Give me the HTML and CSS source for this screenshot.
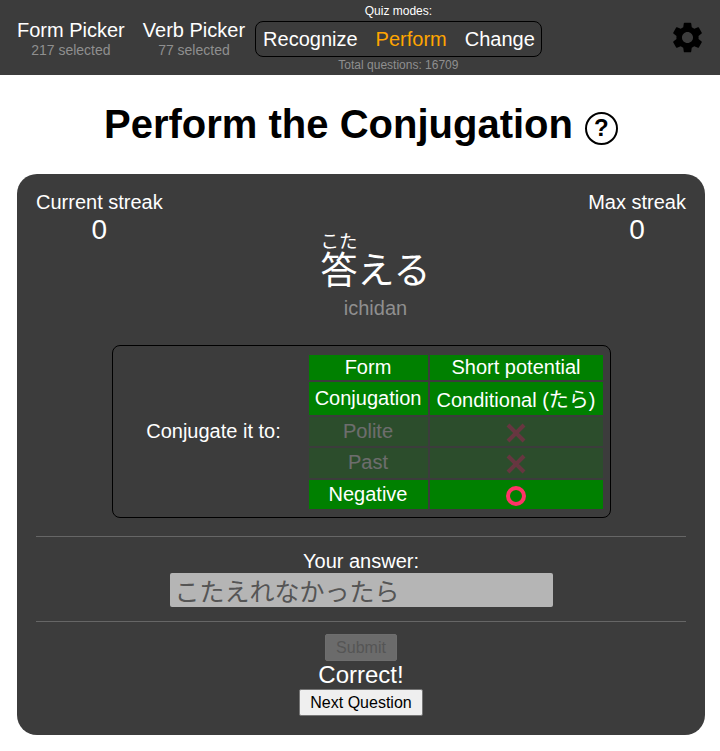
FILE: index.html
```html
<!DOCTYPE html>
<html lang="en">
<head>
  <meta charset="UTF-8">
  <meta name="viewport" content="width=device-width, initial-scale=1.0">
  <title>Perform the Conjugation</title>
  <link rel="stylesheet" href="styles.css">
</head>
<body>
  <header class="topbar">
    <div class="picker">
      <div class="picker-name">Form Picker</div>
      <div class="picker-count">217 selected</div>
    </div>
    <div class="picker">
      <div class="picker-name">Verb Picker</div>
      <div class="picker-count">77 selected</div>
    </div>
    <div class="modes">
      <div class="modes-label">Quiz modes:</div>
      <div class="modes-box">
        <span>Recognize</span>
        <span class="mode-active">Perform</span>
        <span>Change</span>
      </div>
      <div class="modes-total">Total questions: 16709</div>
    </div>
    <svg class="gear" viewBox="0 0 24 24" aria-label="Settings">
      <path d="M19.14 12.94c.04-.3.06-.61.06-.94 0-.32-.02-.64-.07-.94l2.03-1.58c.18-.14.23-.41.12-.61l-1.92-3.32c-.12-.22-.37-.29-.59-.22l-2.39.96c-.5-.38-1.03-.7-1.62-.94l-.36-2.54c-.04-.24-.24-.41-.48-.41h-3.84c-.24 0-.43.17-.47.41l-.36 2.54c-.59.24-1.13.57-1.62.94l-2.39-.96c-.22-.08-.47 0-.59.22L2.74 8.87c-.12.21-.08.47.12.61l2.03 1.58c-.05.3-.09.63-.09.94s.02.64.07.94l-2.03 1.58c-.18.14-.23.41-.12.61l1.92 3.32c.12.22.37.29.59.22l2.39-.96c.5.38 1.03.7 1.62.94l.36 2.54c.05.24.24.41.48.41h3.84c.24 0 .44-.17.47-.41l.36-2.54c.59-.24 1.13-.56 1.62-.94l2.39.96c.22.08.47 0 .59-.22l1.92-3.32c.12-.22.07-.47-.12-.61l-2.01-1.58zM12 15.6c-1.98 0-3.6-1.62-3.6-3.6s1.62-3.6 3.6-3.6 3.6 1.62 3.6 3.6-1.62 3.6-3.6 3.6z"/>
    </svg>
  </header>

  <h1 class="title">Perform the Conjugation <span class="help">?</span></h1>

  <main class="card">
    <div class="card-top">
      <div class="streak">
        <div>Current streak</div>
        <div class="streak-num">0</div>
      </div>
      <div class="word">
        <div class="word-text"><ruby>答<rt>こた</rt></ruby>える</div>
        <div class="word-type">ichidan</div>
      </div>
      <div class="streak">
        <div>Max streak</div>
        <div class="streak-num">0</div>
      </div>
    </div>

    <div class="target">
      <div class="target-label">Conjugate it to:</div>
      <table class="target-table">
        <tr class="row-form"><td class="col-name">Form</td><td class="col-value">Short potential</td></tr>
        <tr class="row-conj"><td>Conjugation</td><td>Conditional (たら)</td></tr>
        <tr class="row-flag row-off">
          <td>Polite</td>
          <td><svg class="mark" viewBox="0 0 20 20"><path class="mark-x" d="M2 2L18 18M18 2L2 18"/></svg></td>
        </tr>
        <tr class="row-flag row-off row-past">
          <td>Past</td>
          <td><svg class="mark" viewBox="0 0 20 20"><path class="mark-x" d="M2 2L18 18M18 2L2 18"/></svg></td>
        </tr>
        <tr class="row-flag">
          <td>Negative</td>
          <td><svg class="mark" viewBox="0 0 20 20"><circle class="mark-o" cx="10" cy="10" r="8"/></svg></td>
        </tr>
      </table>
    </div>

    <hr class="rule rule-first">
    <div class="answer">
      <label class="answer-label" for="answer">Your answer:</label>
      <input class="answer-input" id="answer" type="text" value="こたえれなかったら" disabled>
    </div>
    <hr class="rule rule-second">

    <div class="actions">
      <button class="btn btn-submit" disabled>Submit</button>
      <div class="result">Correct!</div>
      <button class="btn btn-next">Next Question</button>
    </div>
  </main>
</body>
</html>
```

FILE: styles.css
```css
* {
  box-sizing: border-box;
}

body {
  margin: 0;
  background: #fff;
  font-family: "Liberation Sans", "Noto Sans CJK JP", sans-serif;
  font-size: 20px;
  color: #fff;
}

.topbar {
  display: flex;
  align-items: center;
  height: 75px;
  padding: 0 14px 0 17px;
  background: #3c3c3c;
}

.picker {
  margin-right: 18px;
  padding-top: 2px;
  text-align: center;
}

.picker + .picker {
  margin-right: 10px;
}

.picker-name {
  line-height: 23px;
}

.picker-count {
  font-size: 14px;
  line-height: 16px;
  color: #8f8f8f;
}

.modes {
  display: flex;
  flex-direction: column;
  align-items: center;
}

.modes-label {
  font-size: 12px;
  line-height: 19px;
}

.modes-box {
  display: flex;
  gap: 18px;
  height: 36px;
  padding: 0 6px 0 7px;
  border: 1px solid #000;
  border-radius: 8px;
  line-height: 34px;
}

.mode-active {
  color: #ffa500;
}

.modes-total {
  font-size: 12px;
  line-height: 16px;
  color: #8f8f8f;
}

.gear {
  width: 37px;
  height: 37px;
  margin-left: auto;
  fill: #000;
}

.title {
  display: flex;
  justify-content: center;
  align-items: center;
  gap: 12px;
  height: 99px;
  margin: 0;
  padding: 0 0 2px 2px;
  font-size: 40px;
  line-height: 46px;
  color: #000;
}

.help {
  display: flex;
  justify-content: center;
  align-items: center;
  width: 33px;
  height: 33px;
  margin-top: 9px;
  border: 2px solid #000;
  border-radius: 50%;
  font-size: 24px;
}

.card {
  width: 688px;
  height: 561px;
  margin-left: 17px;
  padding: 17px 19px 0;
  border-radius: 20px;
  background: #3c3c3c;
}

.card-top {
  display: flex;
  justify-content: space-between;
  height: 154px;
}

.streak {
  text-align: center;
  line-height: 23px;
}

.streak-num {
  font-size: 28px;
  line-height: 32px;
}

.word {
  padding-top: 40px;
  text-align: center;
}

.word-text {
  font-size: 37px;
  line-height: 50px;
}

.word-text rt {
  font-size: 18.5px;
  line-height: 16px;
}

.word-type {
  line-height: 23px;
  color: #8f8f8f;
}

.target {
  display: flex;
  align-items: center;
  width: 499px;
  height: 173px;
  margin: 0 auto;
  padding: 0 5px 0 8px;
  border: 1px solid #000;
  border-radius: 8px;
}

.target-label {
  flex: 1;
  text-align: center;
}

.target-table {
  border-spacing: 2px;
  table-layout: fixed;
  text-align: center;
}

.target-table td {
  padding: 0;
  background: #008000;
  vertical-align: middle;
}

.col-name {
  width: 119px;
}

.col-value {
  width: 173px;
}

.row-form td {
  height: 25px;
}

.row-conj td {
  height: 33px;
}

.row-flag td {
  height: 29px;
}

.row-past td {
  height: 30px;
}

.row-off td {
  opacity: 0.25;
}

.mark {
  display: block;
  width: 20px;
  height: 20px;
  margin: 3px auto 0;
  fill: none;
  stroke-width: 4;
}

.mark-x {
  stroke: #e8254f;
}

.mark-o {
  stroke: #ff3366;
}

.rule {
  height: 1px;
  margin: 0;
  border: 0;
  background: #666;
}

.rule-first {
  margin-top: 18px;
}

.answer {
  display: flex;
  flex-direction: column;
  align-items: center;
  padding-top: 13px;
  height: 84px;
}

.answer-label {
  line-height: 23px;
}

.answer-input {
  width: 383px;
  height: 34px;
  padding: 0 5px;
  border: 0;
  border-radius: 2px;
  background: #b5b5b5;
  color: #555;
  font-family: inherit;
  font-size: 25px;
}

.actions {
  display: flex;
  flex-direction: column;
  align-items: center;
  padding-top: 12px;
}

.btn {
  height: 27px;
  padding: 0 10px;
  border-radius: 2px;
  font-family: inherit;
  font-size: 16px;
}

.btn-submit {
  border: 1px solid #6e6e6e;
  background: #6b6b6b;
  color: #555;
}

.result {
  font-size: 24px;
  line-height: 28px;
}

.btn-next {
  border: 1px solid #767676;
  background: #efefef;
  color: #000;
}
```
